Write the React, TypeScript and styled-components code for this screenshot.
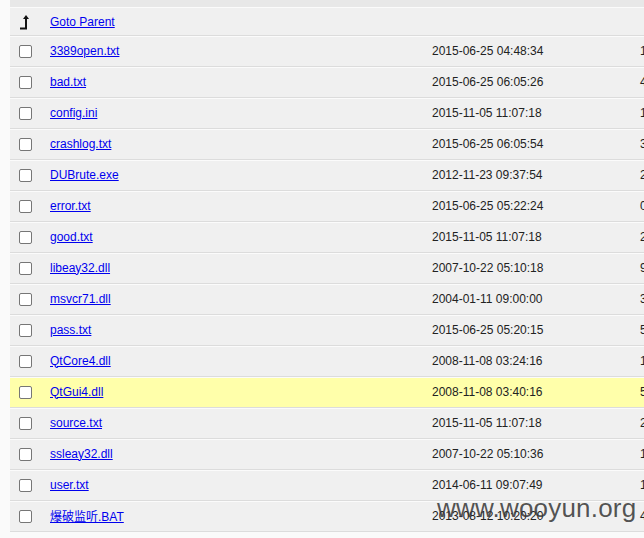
import React from "react";
import styled, { createGlobalStyle } from "styled-components";

const Global = createGlobalStyle`
  html, body { margin: 0; padding: 0; background: #fafafa; overflow: hidden; }
  body { font-family: "Liberation Sans", Arial, "Noto Sans CJK SC", sans-serif; font-size: 12px; }
`;

const Page = styled.div`
  position: relative;
  width: 644px;
  height: 538px;
  overflow: hidden;
  padding-left: 10px;
  box-sizing: border-box;
`;

const Table = styled.div`
  width: 760px;
  display: flex;
  flex-direction: column;
`;

const HeadBand = styled.div`
  height: 7px;
  background: #e8e8e8;
`;

const Row = styled.div<{ $hl?: boolean; $h?: number; $pb?: number }>`
  display: grid;
  grid-template-columns: 30px 382px 208px 140px;
  align-items: center;
  height: ${(p) => p.$h ?? 31}px;
  box-sizing: border-box;
  padding-bottom: ${(p) => p.$pb ?? 2}px;
  border-top: 1px solid #fbfbfb;
  border-bottom: 1px solid #dcdcdc;
  background: ${(p) => (p.$hl ? "#ffffaa" : "#f0f0f0")};
`;

const CheckCell = styled.div`
  padding-left: 9px;
  padding-top: 2px;
  display: flex;
  align-items: center;
`;

const Box = styled.span`
  display: inline-block;
  width: 13px;
  height: 13px;
  box-sizing: border-box;
  border: 1px solid #767676;
  border-radius: 2px;
  background: #fff;
`;

const NameCell = styled.div`
  padding-left: 10px;
`;

const Link = styled.a`
  color: #0000ee;
  text-decoration: underline;
  font-family: "Liberation Sans", Arial, "Noto Sans CJK SC", sans-serif;
`;

const TextCell = styled.div`
  padding-left: 10px;
  color: #222;
  white-space: nowrap;
`;

const IconCell = styled.div`
  padding-left: 9px;
  display: flex;
  align-items: center;
`;

const Watermark = styled.div`
  position: absolute;
  left: 437px;
  top: 493px;
  font-family: "Liberation Sans", Arial, sans-serif;
  font-size: 26px;
  color: rgba(55, 55, 55, 0.85);
  letter-spacing: 0.2px;
  pointer-events: none;
`;

const files: [string, string, string][] = [
  ["3389open.txt", "2015-06-25 04:48:34", "1"],
  ["bad.txt", "2015-06-25 06:05:26", "4"],
  ["config.ini", "2015-11-05 11:07:18", "1"],
  ["crashlog.txt", "2015-06-25 06:05:54", "3"],
  ["DUBrute.exe", "2012-11-23 09:37:54", "2"],
  ["error.txt", "2015-06-25 05:22:24", "0"],
  ["good.txt", "2015-11-05 11:07:18", "2"],
  ["libeay32.dll", "2007-10-22 05:10:18", "9"],
  ["msvcr71.dll", "2004-01-11 09:00:00", "3"],
  ["pass.txt", "2015-06-25 05:20:15", "5"],
  ["QtCore4.dll", "2008-11-08 03:24:16", "1"],
  ["QtGui4.dll", "2008-11-08 03:40:16", "5"],
  ["source.txt", "2015-11-05 11:07:18", "2"],
  ["ssleay32.dll", "2007-10-22 05:10:36", "1"],
  ["user.txt", "2014-06-11 09:07:49", "1"],
  ["爆破监听.BAT", "2013-08-12 10:20:20", "4"],
];

const ParentIcon = () => (
  <svg width="12" height="16" viewBox="0 0 12 16">
    <path d="M1 14.5 H7 V3" stroke="#111" strokeWidth="2" fill="none" />
    <path d="M4 5 L7 1 L10 5 Z" fill="#111" />
  </svg>
);

export default function App() {
  return (
    <Page>
      <Global />
      <Table>
        <HeadBand />
        <Row $h={29} $pb={0}>
          <IconCell>
            <ParentIcon />
          </IconCell>
          <NameCell>
            <Link href="#">Goto Parent</Link>
          </NameCell>
          <TextCell />
          <TextCell />
        </Row>
        {files.map(([name, date, size]) => (
          <Row key={name} $hl={name === "QtGui4.dll"}>
            <CheckCell>
              <Box />
            </CheckCell>
            <NameCell>
              <Link href="#">{name}</Link>
            </NameCell>
            <TextCell>{date}</TextCell>
            <TextCell>{size}</TextCell>
          </Row>
        ))}
      </Table>
      <Watermark>www.wooyun.org</Watermark>
    </Page>
  );
}
